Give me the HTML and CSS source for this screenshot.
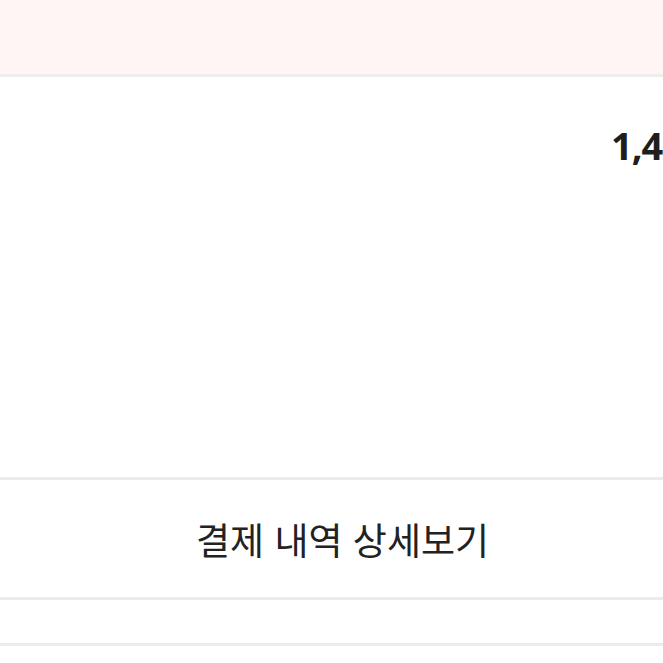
FILE: index.html
```html
<!DOCTYPE html>
<html lang="ko">
<head>
	<meta charset="UTF-8">
	<title>결제 내역</title>
	<link rel="stylesheet" href="styles.css">
</head>
<body>
	<div class="page">
		<div class="notice"></div>
		<div class="summary">
			<div class="amount">1,4</div>
		</div>
		<div class="detail">결제 내역 상세보기</div>
		<div class="gap"></div>
		<div class="rest"></div>
	</div>
</body>
</html>
```

FILE: styles.css
```css
html,body{
	margin: 0;
	padding: 0;
	background: #fff;
	overflow: hidden;
}
.page{
	width: 685px;
	font-family: "Noto Sans", "Noto Sans CJK KR", sans-serif;
	color: #222;
}
.notice{
	height: 74px;
	background-color: #fff5f4;
	border-bottom: 3px solid #ededeb;
}
.summary{
	height: 403px;
	box-sizing: border-box;
	padding: 49px 0 0 611px;
	border-bottom: 3px solid #ececec;
	background-color: #fefffe;
}
.amount{
	font-size: 38px;
	line-height: 1;
	font-weight: 700;
	letter-spacing: -1px;
	white-space: nowrap;
	color: #1e1e1e;
}
.detail{
	height: 117px;
	display: flex;
	align-items: center;
	justify-content: center;
	font-family: "Noto Sans CJK KR", sans-serif;
	font-size: 37px;
	font-weight: 400;
	color: #222;
	border-bottom: 3px solid #ececec;
}
.gap{
	height: 43px;
	border-bottom: 3px solid #ececec;
}
.rest{
	height: 40px;
}
```
